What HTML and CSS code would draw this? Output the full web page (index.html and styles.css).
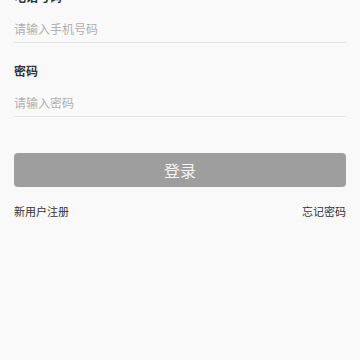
FILE: index.html
```html
<!DOCTYPE html>
<html lang="zh-CN">
  <head>
    <meta charset="UTF-8" />
    <meta name="viewport" content="width=device-width, initial-scale=1.0" />
    <title>登录</title>
    <link rel="stylesheet" href="styles.css">
  </head>
  <body>
    <section class="login">
      <div class="field">
        <label class="field-label" for="phone">电话号码</label>
        <input class="field-input" id="phone" type="tel" placeholder="请输入手机号码" />
      </div>
      <div class="field">
        <label class="field-label" for="pwd">密码</label>
        <input class="field-input" id="pwd" type="password" placeholder="请输入密码" />
      </div>
      <button class="login-btn" type="button">登录</button>
      <div class="links">
        <a href="#">新用户注册</a>
        <a href="#">忘记密码</a>
      </div>
    </section>
  </body>
</html>
```

FILE: styles.css
```css
body {
  margin: 0;
  padding: 0;
  background-color: #f9f9f9;
  font-family: "Noto Sans CJK SC", "Noto Sans", sans-serif;
  color: #333333;
}

.login {
  padding: 0 14px;
  margin-top: -11px;
}

.field {
  display: flex;
  flex-direction: column;
  margin-bottom: 20px;
}

.field-label {
  font-size: 12px;
  line-height: 16px;
  font-weight: bold;
  color: #333333;
  margin-bottom: 9px;
}

.field-input {
  height: 28px;
  padding: 0;
  border: none;
  border-bottom: 1px solid #e4e4e4;
  background: transparent;
  font-family: inherit;
  font-size: 12px;
  outline: none;
}

.field-input::placeholder {
  color: #b0b0b0;
}

.login-btn {
  display: block;
  width: 100%;
  height: 34px;
  margin-top: 36px;
  border: none;
  border-radius: 4px;
  background-color: #9e9e9e;
  color: #f4f4f4;
  font-family: inherit;
  font-size: 16px;
}

.links {
  display: flex;
  justify-content: space-between;
  margin-top: 16px;
  line-height: 16px;
}

.links a {
  font-size: 11px;
  color: #333333;
  text-decoration: none;
}
```
